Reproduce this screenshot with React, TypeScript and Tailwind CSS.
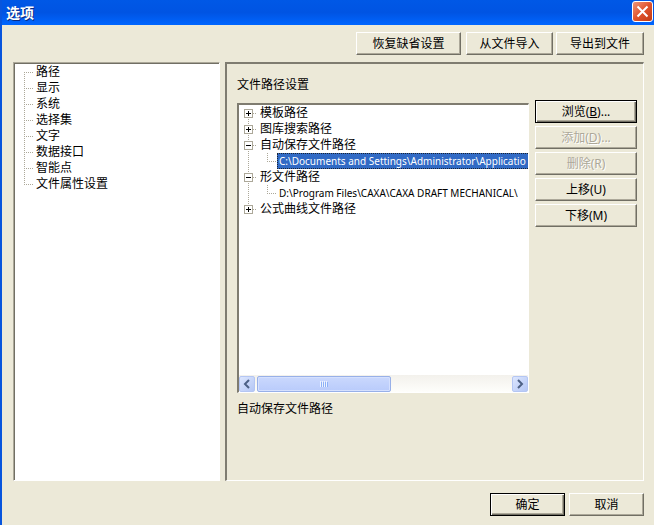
import React, { useState } from "react";
import clsx from "clsx";

const categories = [
  "路径",
  "显示",
  "系统",
  "选择集",
  "文字",
  "数据接口",
  "智能点",
  "文件属性设置",
];

type PathGroup = { name: string; children?: string[]; open?: boolean };

const pathGroups: PathGroup[] = [
  { name: "模板路径" },
  { name: "图库搜索路径" },
  {
    name: "自动保存文件路径",
    open: true,
    children: ["C:\\Documents and Settings\\Administrator\\Applicatio"],
  },
  {
    name: "形文件路径",
    open: true,
    children: ["D:\\Program Files\\CAXA\\CAXA DRAFT MECHANICAL\\"],
  },
  { name: "公式曲线文件路径" },
];

// Dotted connector in front of a top level category
function CategoryBranch({ first, last }: { first: boolean; last: boolean }) {
  return (
    <svg
      width="21"
      height="16"
      className="shrink-0"
      stroke="#aca899"
      strokeDasharray="1 1"
      aria-hidden="true"
    >
      <path d={`M9.5 ${first ? 8 : 0}V${last ? 8 : 16}`} />
      <path d="M9 8.5H19" />
    </svg>
  );
}

// Plus / minus box with the line that runs through it
function GroupBranch({
  open,
  first,
  last,
}: {
  open?: boolean;
  first: boolean;
  last: boolean;
}) {
  return (
    <svg width="21" height="16" className="shrink-0" aria-hidden="true">
      <g stroke="#aca899" strokeDasharray="1 1">
        <path d={`M9.5 ${first ? 8 : 0}V${last ? 8 : 16}`} />
        <path d="M10 8.5H18" />
      </g>
      <rect x="5.5" y="4.5" width="8" height="8" fill="#fff" stroke="#aca899" />
      <path d="M7 8.5H12" stroke="#000" />
      {!open && <path d="M9.5 6V11" stroke="#000" />}
    </svg>
  );
}

function LeafBranch() {
  return (
    <svg
      width="38"
      height="16"
      className="shrink-0"
      stroke="#aca899"
      strokeDasharray="1 1"
      aria-hidden="true"
    >
      <path d="M9.5 0V16" />
      <path d="M28.5 0V8" />
      <path d="M28 8.5H37" />
    </svg>
  );
}

function DialogButton({
  children,
  isDefault,
  disabled,
  className,
}: {
  children: React.ReactNode;
  isDefault?: boolean;
  disabled?: boolean;
  className?: string;
}) {
  return (
    <button
      type="button"
      disabled={disabled}
      className={clsx(
        "h-[23px] whitespace-nowrap border bg-[#ece9d8] text-center",
        isDefault
          ? "border-black shadow-[inset_1px_1px_0_#fff,inset_-1px_-1px_0_#716f64,inset_-2px_-2px_0_#aca899]"
          : "border-t-white border-l-white border-r-[#716f64] border-b-[#716f64] shadow-[inset_-1px_-1px_0_#aca899]",
        disabled && "text-[#aca899] [text-shadow:1px_1px_0_#fff]",
        className
      )}
    >
      {children}
    </button>
  );
}

function ScrollArrow({ direction }: { direction: "left" | "right" }) {
  return (
    <button
      type="button"
      aria-label={direction === "left" ? "向左滚动" : "向右滚动"}
      className="flex h-4 w-4 shrink-0 items-center justify-center rounded-xs border border-[#b4c6f3] bg-linear-to-br from-[#dce6fe] to-[#b5c7f5]"
    >
      <svg width="8" height="10" fill="none" stroke="#4d6185" strokeWidth="2">
        <path d={direction === "left" ? "M6 1L2 5L6 9" : "M2 1L6 5L2 9"} />
      </svg>
    </button>
  );
}

export default function App() {
  const [category, setCategory] = useState("路径");
  const [selected, setSelected] = useState(pathGroups[2].children![0]);

  return (
    <div className="flex min-h-screen flex-col border-l-2 border-[#0855dd] bg-[#ece9d8] font-['Noto_Sans','Noto_Sans_CJK_SC',sans-serif] text-xs leading-4 text-black">
      {/* Title bar */}
      <header className="flex h-[25px] items-center justify-between bg-linear-to-b from-[#0058e6] via-[#0054e3] to-[#0066ff] pr-px pl-1">
        <h1 className="text-sm font-bold text-white [text-shadow:1px_1px_0_#0a2a80]">
          选项
        </h1>
        <button
          type="button"
          aria-label="关闭"
          className="mb-0.5 flex h-[21px] w-[21px] items-center justify-center rounded-[3px] border border-white bg-linear-to-br from-[#ee9478] via-[#e0532c] to-[#c13a12]"
        >
          <svg width="13" height="13" stroke="#fff" strokeWidth="2">
            <path d="M1.5 1.5L11.5 11.5M11.5 1.5L1.5 11.5" />
          </svg>
        </button>
      </header>

      <main className="flex flex-1 flex-col pt-[7px] pr-[10px] pb-[9px] pl-[11px]">
        <div className="flex justify-end">
          <DialogButton className="mr-[5px] w-[105px]">恢复缺省设置</DialogButton>
          <DialogButton className="mr-[3px] w-[87px]">从文件导入</DialogButton>
          <DialogButton className="w-[88px]">导出到文件</DialogButton>
        </div>

        <div className="mt-[7px] flex flex-1 gap-[5px]">
          {/* Category list */}
          <nav className="w-[207px] shrink-0 border border-t-[#aca899] border-l-[#aca899] border-r-white border-b-white bg-white">
            <ul className="h-full border-t border-l border-[#716f64]">
              {categories.map((name, i) => (
                <li key={name} className="flex h-4">
                  <CategoryBranch
                    first={i === 0}
                    last={i === categories.length - 1}
                  />
                  <button
                    type="button"
                    aria-current={category === name}
                    onClick={() => setCategory(name)}
                  >
                    {name}
                  </button>
                </li>
              ))}
            </ul>
          </nav>

          {/* Path settings */}
          <section className="flex min-w-0 flex-1 border-t-2 border-r border-b border-l-2 border-t-[#7f7c70] border-r-white border-b-white border-l-[#7f7c70] pr-[6px] pl-[10px]">
            <div className="flex min-w-0 flex-1 flex-col pt-[13px] pb-[63px]">
              <h2>文件路径设置</h2>
              <div className="mt-[10px] flex flex-1 flex-col border-t-2 border-r border-b border-l-2 border-t-[#7f7c70] border-r-white border-b-white border-l-[#7f7c70] bg-white">
                <ul className="flex-1 overflow-hidden whitespace-nowrap">
                  {pathGroups.map((group, i) => (
                    <li key={group.name}>
                      <div className="flex h-4">
                        <GroupBranch
                          open={group.open}
                          first={i === 0}
                          last={i === pathGroups.length - 1}
                        />
                        <span>{group.name}</span>
                      </div>
                      {group.children?.map((path) => (
                        <div key={path} className="flex h-4">
                          <LeafBranch />
                          <button
                            type="button"
                            onClick={() => setSelected(path)}
                            className={clsx(
                              "flex-1 border-y border-l border-dotted pl-px text-left text-[10px] leading-[14px]",
                              selected === path
                                ? "border-[#1c2430] bg-[#316ac5] text-white"
                                : "border-transparent"
                            )}
                          >
                            {path}
                          </button>
                        </div>
                      ))}
                    </li>
                  ))}
                </ul>
                <div className="flex h-[17px] items-center justify-between bg-linear-to-b from-[#f3f1ec] to-[#fefefb]">
                  <ScrollArrow direction="left" />
                  <div className="flex flex-1 px-0.5">
                    <div className="flex h-4 w-[53%] items-center justify-center rounded-xs border border-[#98b0e8] bg-linear-to-b from-[#cad8fd] to-[#b9cbfb] shadow-[inset_0_0_0_1px_#d5e0fe]">
                      <svg width="8" height="6" strokeDasharray="1 1">
                        <path d="M0 3H8" stroke="#eef4fe" strokeWidth="6" />
                        <path d="M1 4H8" stroke="#8cb0f8" strokeWidth="6" />
                      </svg>
                    </div>
                  </div>
                  <ScrollArrow direction="right" />
                </div>
              </div>
              <p className="mt-2">自动保存文件路径</p>
            </div>

            <div className="ml-[6px] flex w-[102px] shrink-0 flex-col gap-[3px] pt-9">
              <DialogButton isDefault>
                浏览(<u>B</u>)...
              </DialogButton>
              <DialogButton disabled>
                添加(<u>D</u>)...
              </DialogButton>
              <DialogButton disabled>删除(R)</DialogButton>
              <DialogButton>上移(U)</DialogButton>
              <DialogButton>下移(M)</DialogButton>
            </div>
          </section>
        </div>

        <footer className="mt-3 flex justify-end gap-1">
          <DialogButton isDefault className="w-[75px]">
            确定
          </DialogButton>
          <DialogButton className="w-[75px]">取消</DialogButton>
        </footer>
      </main>
    </div>
  );
}
